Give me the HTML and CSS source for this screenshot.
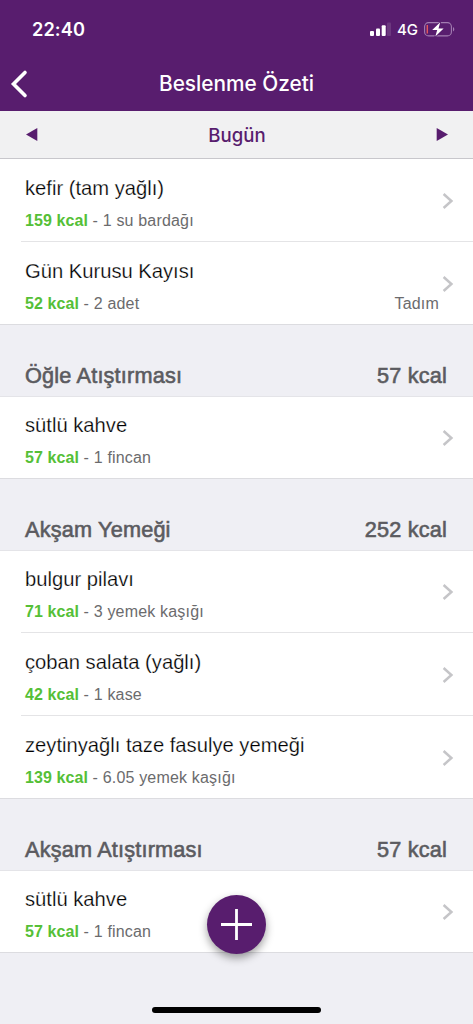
FILE: index.html
```html
<!DOCTYPE html>
<html lang="tr">
<head>
<meta charset="utf-8">
<meta name="viewport" content="width=device-width">
<title>Beslenme Özeti</title>
<link rel="stylesheet" href="styles.css">
</head>
<body>
<svg width="0" height="0" class="defs"><symbol id="chev" viewBox="0 0 12 18"><path d="M1.6 2l7.8 7-7.8 7" fill="none" stroke="#c5c5c8" stroke-width="2.5"/></symbol></svg>
<div class="screen">
  <header class="top">
    <div class="status">
      <span class="time">22:40</span>
      <div class="indicators">
        <svg width="22" height="14" viewBox="0 0 22 14"><g fill="#fff"><rect x="1" y="9" width="4" height="5" rx="1"/><rect x="7" y="6.5" width="4" height="7.5" rx="1"/><rect x="12.7" y="3.3" width="4" height="10.7" rx="1"/><rect x="18" y="0.5" width="4" height="13.5" rx="1" opacity=".12"/></g></svg>
        <span class="network">4G</span>
        <svg width="31" height="16" viewBox="0 0 31 16"><rect x=".6" y=".6" width="26.8" height="13.3" rx="4" fill="none" stroke="#a27db1" stroke-width="1.1"/><path d="M29 5c1.8.7 1.8 3.8 0 4.5z" fill="#a27db1"/><path d="M3.3 3v8.5" stroke="#e4575c" stroke-width="1.4"/><path d="M16.2.3L8.2 8h5L11.3 14.5l8.3-8h-5.1z" fill="#fff" stroke="#581d6e" stroke-width="1.6" paint-order="stroke"/></svg>
      </div>
    </div>
    <div class="nav">
      <svg class="back" width="18" height="30" viewBox="0 0 18 30"><path d="M15 3.5L3.5 15 15 26.5" fill="none" stroke="#fff" stroke-width="3.6" stroke-linecap="round" stroke-linejoin="miter"/></svg>
      <h1>Beslenme Özeti</h1>
    </div>
  </header>
  <div class="datebar">
    <svg width="12" height="13" viewBox="0 0 12 13"><path d="M11.3 0v13L0 6.5z" fill="#581d6e"/></svg>
    <span>Bugün</span>
    <svg width="12" height="13" viewBox="0 0 12 13"><path d="M.7 0v13L12 6.5z" fill="#581d6e"/></svg>
  </div>
  <main>
    <div class="row next"><div class="info"><p class="name">kefir (tam yağlı)</p><p class="detail"><b>159 kcal</b> - 1 su bardağı</p></div><svg class="chev"><use href="#chev"/></svg></div>
    <div class="row next"><div class="info"><p class="name">Gün Kurusu Kayısı</p><p class="detail"><b>52 kcal</b> - 2 adet<span class="brand">Tadım</span></p></div><svg class="chev"><use href="#chev"/></svg></div>
    <h2 class="meal"><span>Öğle Atıştırması</span><span>57 kcal</span></h2>
    <div class="row"><div class="info"><p class="name">sütlü kahve</p><p class="detail"><b>57 kcal</b> - 1 fincan</p></div><svg class="chev"><use href="#chev"/></svg></div>
    <h2 class="meal"><span>Akşam Yemeği</span><span>252 kcal</span></h2>
    <div class="row"><div class="info"><p class="name">bulgur pilavı</p><p class="detail"><b>71 kcal</b> - 3 yemek kaşığı</p></div><svg class="chev"><use href="#chev"/></svg></div>
    <div class="row next"><div class="info"><p class="name">çoban salata (yağlı)</p><p class="detail"><b>42 kcal</b> - 1 kase</p></div><svg class="chev"><use href="#chev"/></svg></div>
    <div class="row next"><div class="info"><p class="name">zeytinyağlı taze fasulye yemeği</p><p class="detail"><b>139 kcal</b> - 6.05 yemek kaşığı</p></div><svg class="chev"><use href="#chev"/></svg></div>
    <h2 class="meal"><span>Akşam Atıştırması</span><span>57 kcal</span></h2>
    <div class="row"><div class="info"><p class="name">sütlü kahve</p><p class="detail"><b>57 kcal</b> - 1 fincan</p></div><svg class="chev"><use href="#chev"/></svg></div>
  </main>
  <button class="add" aria-label="Ekle"><svg width="32" height="32" viewBox="0 0 32 32"><path d="M15.5 0v31M0 15.5h31" stroke="#fff" stroke-width="2.8"/></svg></button>
  <div class="home"></div>
</div>
</body>
</html>
```

FILE: styles.css
```css
* { box-sizing: border-box; }
body, p, h1, h2 { margin: 0; }
body { background: #efeff4; font-family: "Liberation Sans", Arial, sans-serif; }
.defs { position: absolute; }
.screen { position: relative; width: 473px; height: 1024px; overflow: hidden; background: #efeff4; }

.top { height: 111px; background: #581d6e; color: #fff; font-family: Inter, sans-serif; }
.status { display: flex; justify-content: space-between; height: 56px; padding: 18px 18px 0 32px; }
.time { font-size: 18.2px; font-weight: 600; line-height: 22px; letter-spacing: .1px; }
.indicators { display: flex; align-items: flex-start; padding-top: 4px; }
.network { margin: -3px 6px 0 6px; font-size: 15px; font-weight: 500; line-height: 22px; }
.nav { display: grid; grid-template-columns: 28px 1fr 28px; align-items: center; height: 55px; padding-left: 10px; padding-right: 10px; }
.nav h1 { font-size: 20.8px; font-weight: 550; text-align: center; }

.datebar { display: flex; justify-content: space-between; align-items: center; height: 48px; padding: 0 25px 0 26px; background: #f1f1f2; border-bottom: 1px solid #c8c7cc; color: #581d6e; }
.datebar span { font: 550 18.6px/24px Inter, sans-serif; }

.row { display: flex; height: 82px; padding: 16px 19px 0 25px; background: #fff; border-bottom: 1px solid #dcdce0; }
.row.next { height: 83px; padding-top: 17px; }
.row:has(+ .row) { border-bottom: 0; background: linear-gradient(#e4e4e6, #e4e4e6) 21px 100% / 100% 1px no-repeat #fff; }
.info { flex: 1; }
.name { font-size: 20.2px; line-height: 24px; color: #000; -webkit-text-stroke: .25px #fff; }
.detail { display: flex; white-space: pre; margin-top: 11px; font-size: 16px; line-height: 20px; letter-spacing: .18px; color: #6b6b6d; }
.detail b { color: #55bf37; letter-spacing: .08px; }
.brand { margin-left: auto; margin-right: 3px; }
.chev { width: 12px; height: 18px; margin-top: 16px; }
.meal { display: flex; justify-content: space-between; height: 72px; padding: 38px 26px 0 25px; border-bottom: 1px solid #e4e4e8; font-size: 21.7px; font-weight: 400; line-height: 26px; letter-spacing: .18px; color: #5b5b60; -webkit-text-stroke: .6px #5b5b60; }

.add { position: absolute; left: 207px; top: 895px; width: 59px; height: 59px; padding: 0; border: 0; border-radius: 50%; display: grid; place-items: center; background: #581d6e; box-shadow: 0 4px 8px rgba(0,0,0,.38); }
.home { position: absolute; left: 152px; top: 1007px; width: 169px; height: 6px; border-radius: 3px; background: #000; }
```
